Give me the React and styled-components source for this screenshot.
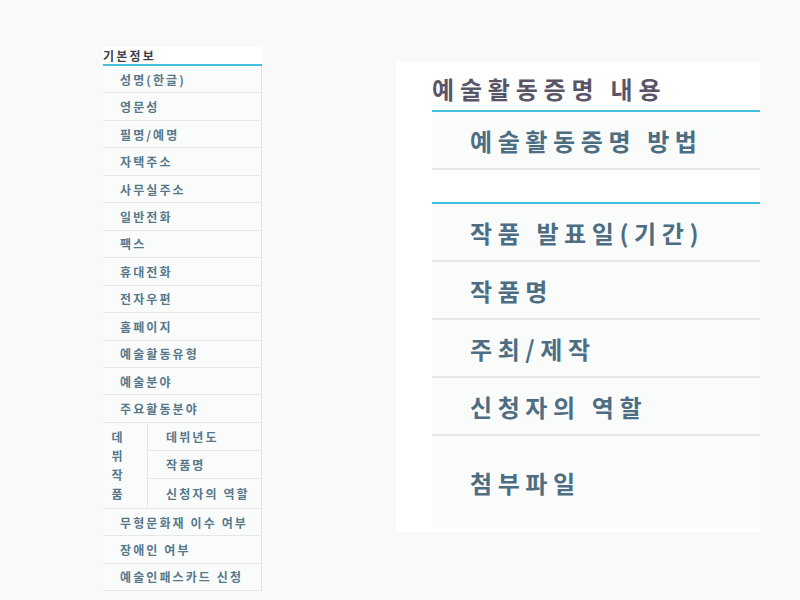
import styled, { createGlobalStyle } from "styled-components";

const GlobalStyle = createGlobalStyle`
  html, body {
    margin: 0;
    padding: 0;
    background: #f9f9f9;
  }
  body {
    font-family: "Noto Sans CJK KR", "Noto Sans", sans-serif;
  }
`;

const Page = styled.div`
  display: flex;
  align-items: flex-start;
  padding: 47px 0 0 103px;
  gap: 134px;
`;

const SidePanel = styled.div`
  width: 159px;
`;

const SideTitle = styled.div`
  height: 17px;
  line-height: 17px;
  font-size: 12px;
  font-weight: 700;
  letter-spacing: 2.2px;
  color: #3e3e48;
  background: #fff;
  border-bottom: 2px solid #42bfe0;
`;

const SideTable = styled.div`
  width: 158px;
  background: #fafcfc;
  border-right: 1px solid #e2e4e4;
`;

const SideRow = styled.div`
  box-sizing: border-box;
  height: ${(p) => p.$h || 27.46}px;
  display: flex;
  align-items: center;
  padding-left: ${(p) => p.$indent || 17}px;
  font-size: 12px;
  font-weight: 700;
  letter-spacing: 2.1px;
  color: #56778a;
  border-bottom: 1px solid #e6e8e8;
  white-space: nowrap;
`;

const DebutGroup = styled.div`
  display: flex;
  border-bottom: 1px solid #e6e8e8;
`;

const DebutLabel = styled.div`
  width: 45px;
  box-sizing: border-box;
  border-right: 1px solid #e6e8e8;
  display: flex;
  flex-direction: column;
  align-items: center;
  justify-content: center;
  gap: 5px;
  padding-right: 16px;
  font-size: 12px;
  font-weight: 700;
  color: #56778a;
  line-height: 14px;
`;

const DebutRows = styled.div`
  flex: 1;
  & > div:last-child {
    border-bottom: none;
  }
`;

const MainPanel = styled.div`
  width: 328px;
  height: 470px;
  margin-top: 15px;
  padding-left: 36px;
  background: #fff;
`;

const MainTitle = styled.div`
  height: 50px;
  display: flex;
  align-items: center;
  padding-top: 4px;
  box-sizing: border-box;
  font-size: 24px;
  font-weight: 700;
  letter-spacing: 5.8px;
  color: #5a5468;
  white-space: nowrap;
  border-bottom: 2px solid #42bfe0;
`;

const Section = styled.div`
  background: #fafcfc;
  border-top: ${(p) => (p.$topLine ? "2px solid #42bfe0" : "none")};
`;

const Gap = styled.div`
  height: 32px;
  background: #fff;
`;

const MainRow = styled.div`
  box-sizing: border-box;
  height: ${(p) => p.$h || 58}px;
  display: flex;
  align-items: center;
  padding-left: 38px;
  font-size: 24px;
  font-weight: 700;
  letter-spacing: 5.6px;
  color: #4d6d82;
  white-space: nowrap;
  border-bottom: ${(p) => (p.$noLine ? "none" : "2px solid #e6e8e8")};
`;

const sideItems = [
  "성명(한글)",
  "영문성",
  "필명/예명",
  "자택주소",
  "사무실주소",
  "일반전화",
  "팩스",
  "휴대전화",
  "전자우편",
  "홈페이지",
  "예술활동유형",
  "예술분야",
  "주요활동분야",
];

const afterItems = ["무형문화재 이수 여부", "장애인 여부", "예술인패스카드 신청"];

const debutItems = ["데뷔년도", "작품명", "신청자의 역할"];

const workRows = ["작품 발표일(기간)", "작품명", "주최/제작", "신청자의 역할"];

export default function App() {
  return (
    <>
      <GlobalStyle />
      <Page>
        <SidePanel>
          <SideTitle>기본정보</SideTitle>
          <SideTable>
            {sideItems.map((t) => (
              <SideRow key={t}>{t}</SideRow>
            ))}
            <DebutGroup>
              <DebutLabel>
                <span>데</span>
                <span>뷔</span>
                <span>작</span>
                <span>품</span>
              </DebutLabel>
              <DebutRows>
                {debutItems.map((t) => (
                  <SideRow key={t} $h={28.3} $indent={18}>
                    {t}
                  </SideRow>
                ))}
              </DebutRows>
            </DebutGroup>
            {afterItems.map((t) => (
              <SideRow key={t}>{t}</SideRow>
            ))}
          </SideTable>
        </SidePanel>

        <MainPanel>
          <MainTitle>예술활동증명 내용</MainTitle>
          <Section>
            <MainRow>예술활동증명 방법</MainRow>
          </Section>
          <Gap />
          <Section $topLine>
            {workRows.map((t) => (
              <MainRow key={t}>{t}</MainRow>
            ))}
            <MainRow $h={92} $noLine>
              첨부파일
            </MainRow>
          </Section>
        </MainPanel>
      </Page>
    </>
  );
}
